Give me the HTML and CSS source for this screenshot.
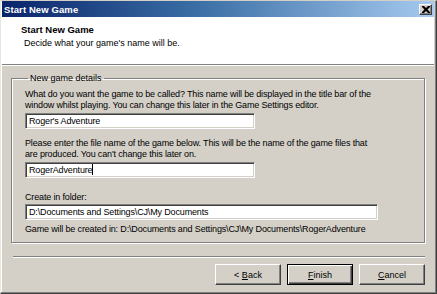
FILE: index.html
```html
<!DOCTYPE html>
<html>
<head>
<meta charset="utf-8">
<link rel="stylesheet" href="styles.css">
</head>
<body>
<div class="window">
  <div class="titlebar">
    <span class="title">Start New Game</span>
    <span class="close"><svg width="8" height="7" viewBox="0 0 8 7"><path d="M0 0h2l2 2 2-2h2v1L5.5 3.5 8 6v1H6L4 5 2 7H0V6l2.5-2.5L0 1z" fill="#000"/></svg></span>
  </div>
  <div class="header">
    <div class="h-title">Start New Game</div>
    <div class="h-sub">Decide what your game's name will be.</div>
  </div>
  <div class="body">
    <fieldset class="group">
      <legend>New game details</legend>
      <p class="text">What do you want the game to be called? This name will be displayed in the title bar of the<br>window whilst playing. You can change this later in the Game Settings editor.</p>
      <div class="input short">Roger's Adventure</div>
      <p class="text gap">Please enter the file name of the game below. This will be the name of the game files that<br>are produced. You can't change this later on.</p>
      <div class="input short">RogerAdventure<span class="caret"></span></div>
      <p class="text gap2">Create in folder:</p>
      <div class="input long tight">D:\Documents and Settings\CJ\My Documents</div>
      <p class="text info">Game will be created in: D:\Documents and Settings\CJ\My Documents\RogerAdventure</p>
    </fieldset>
    <div class="sep"></div>
    <div class="buttons">
      <div class="btn"><span>&lt; <u>B</u>ack</span></div>
      <div class="btn default"><span><u>F</u>inish</span></div>
      <div class="btn"><span><u>C</u>ancel</span></div>
    </div>
  </div>
</div>
</body>
</html>
```

FILE: styles.css
```css
* { box-sizing: border-box; }
html, body { margin: 0; padding: 0; }
body {
  width: 437px;
  height: 294px;
  overflow: hidden;
  background: #d4d0c8;
  font-family: Tahoma, "Liberation Sans", Arial, sans-serif;
  font-size: 9px;
  color: #000;
}
.window {
  width: 437px;
  height: 294px;
  display: flex;
  flex-direction: column;
  background: #d4d0c8;
  border-top: 1px solid #d4d0c8;
  border-left: 1px solid #e8e6e0;
  border-right: 1px solid #404040;
  border-bottom: 1px solid #404040;
  box-shadow: inset -1px -1px 0 #808080, inset 1px 0 0 #ffffff;
  padding: 0 2px 2px 1px;
}
.titlebar {
  height: 16px;
  flex: none;
  display: flex;
  align-items: center;
  justify-content: space-between;
  background: linear-gradient(to right, #0a246a 0%, #3a6ea5 45%, #a6caf0 100%);
  padding: 0 2px 0 2px;
}
.title {
  color: #fff;
  font-weight: bold;
  font-size: 9.5px;
  letter-spacing: 0.1px;
}
.close {
  width: 13px;
  height: 11px;
  background: #d4d0c8;
  display: flex;
  align-items: center;
  justify-content: center;
  border-top: 1px solid #fff;
  border-left: 1px solid #fff;
  border-right: 1px solid #404040;
  border-bottom: 1px solid #404040;
  box-shadow: inset -1px -1px 0 #808080;
}
.header {
  height: 48px;
  flex: none;
  background: #fff;
  border-bottom: 1px solid #808080;
  box-shadow: 0 1px 0 #fff;
  padding: 6px 0 0 19px;
}
.h-title {
  font-weight: bold;
  height: 14px;
  line-height: 14px;
  font-size: 9.5px;
}
.h-sub {
  margin: 0 0 0 3px;
  height: 13px;
  line-height: 13px;
}
.body {
  flex: 1;
  padding: 8px 9px 0 9px;
  display: flex;
  flex-direction: column;
}
.group {
  margin: 0;
  height: 170px;
  padding: 6px 0 0 13px;
  border: 1px solid #808080;
  box-shadow: inset 1px 1px 0 #fff, 1px 1px 0 #fff;
  min-inline-size: 0;
}
.group legend {
  padding: 0 2px 0 2px;
  margin-left: 3px;
  line-height: 10px;
}
.text {
  margin: 0;
  line-height: 11px;
  white-space: nowrap;
  letter-spacing: -0.15px;
}
.text.gap { margin-top: 9px; }
.text.gap2 { margin-top: 14px; }
.text.info { margin-top: 4px; }
.input {
  margin-top: 2px;
  height: 16px;
  background: #fff;
  border-top: 1px solid #808080;
  border-left: 1px solid #808080;
  border-right: 1px solid #fff;
  border-bottom: 1px solid #fff;
  box-shadow: inset 1px 1px 0 #404040, inset -1px -1px 0 #d4d0c8;
  padding: 0 0 0 3px;
  line-height: 14px;
  white-space: nowrap;
  letter-spacing: -0.15px;
}
.input.tight { margin-top: 1px; }
.input.short { width: 230px; }
.input.long { width: 353px; }
.caret {
  display: inline-block;
  width: 1px;
  height: 11px;
  background: #000;
  vertical-align: -2px;
}
.sep {
  margin-top: 13px;
  margin-left: 2px;
  height: 2px;
  border-top: 1px solid #808080;
  border-bottom: 1px solid #fff;
}
.buttons {
  margin-top: 6px;
  display: flex;
  justify-content: flex-end;
  gap: 6px;
  padding-right: 0;
}
.btn {
  width: 66px;
  height: 21px;
  display: flex;
  align-items: center;
  justify-content: center;
  border-top: 1px solid #fff;
  border-left: 1px solid #fff;
  border-right: 1px solid #404040;
  border-bottom: 1px solid #404040;
  box-shadow: inset -1px -1px 0 #808080;
}
.btn.default {
  border: 1px solid #000;
  box-shadow: inset 1px 1px 0 #fff, inset -1px -1px 0 #404040, inset -2px -2px 0 #808080;
}
.btn u { text-decoration: underline; }
```
